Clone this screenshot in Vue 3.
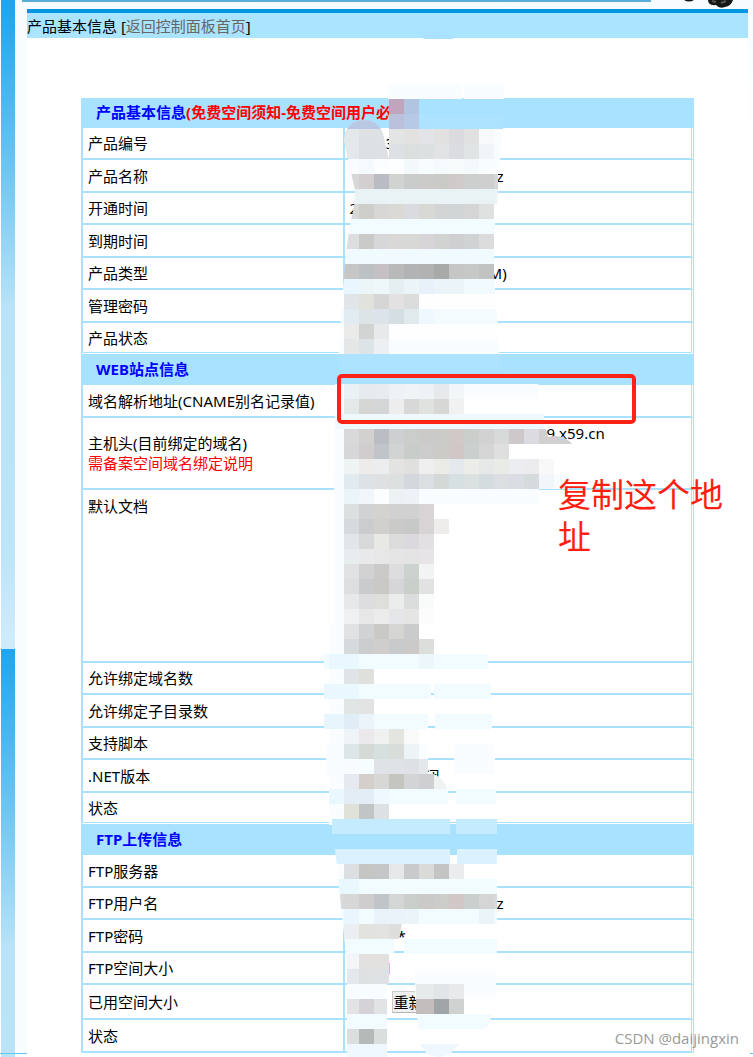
<script setup>
const sections = [
  {
    title: '产品基本信息',
    link: '(免费空间须知-免费空间用户必',
    rows: [
      { label: '产品编号', value: '3', indent: 41, size: 'r32' },
      { label: '产品名称', value: 'z', indent: 152, size: 'r33' },
      { label: '开通时间', value: '2', indent: 5, size: 'r32' },
      { label: '到期时间', size: 'r33' },
      { label: '产品类型', value: 'M)', indent: 144, size: 'r32' },
      { label: '管理密码', size: 'r33' },
      { label: '产品状态', size: 'r31' }
    ]
  },
  {
    title: 'WEB站点信息',
    rows: [
      { label: '域名解析地址(CNAME别名记录值)', size: 'r33' },
      { label: '主机头(目前绑定的域名)', note: '需备案空间域名绑定说明', value: '9 x59.cn', indent: 202, size: 'host' },
      { label: '默认文档', value: 'i', indent: 27, size: 'docs' },
      { label: '允许绑定域名数', size: 'r32' },
      { label: '允许绑定子目录数', size: 'r33' },
      { label: '支持脚本', size: 'r32' },
      { label: '.NET版本', value: '闭', indent: 80, size: 'r33' },
      { label: '状态', size: 'r31' }
    ]
  },
  {
    title: 'FTP上传信息',
    rows: [
      { label: 'FTP服务器', size: 'r33' },
      { label: 'FTP用户名', value: 'z', indent: 152, size: 'r32' },
      { label: 'FTP密码', value: '*', indent: 53, size: 'r33' },
      { label: 'FTP空间大小', value: 'l', indent: 42, size: 'r32' },
      { label: '已用空间大小', button: '重新', indent: 47, size: 'r35' },
      { label: '状态', size: 'r33' }
    ]
  }
]

// Pale smears: x, y, width, height, colour
const smears = [
  [388, 84, 74, 15, '#f9fdff'], [464, 84, 40, 15, '#f9fdff'],
  [419, 114, 84, 15, '#aee3ff'],
  [389, 129, 112, 30, '#f9fdff'], [346, 159, 154, 15, '#f9fdff'],
  [350, 174, 148, 15, '#d6d7d7'], [353, 189, 146, 15, '#e9f3f6'],
  [350, 204, 144, 15, '#d8d8d8'], [348, 219, 147, 15, '#f2fbff'],
  [346, 234, 148, 15, '#dcdedf'], [344, 249, 150, 15, '#f0faff'],
  [343, 264, 151, 15, '#c6c6c6'], [342, 279, 153, 15, '#f1fbff'],
  [340, 294, 156, 15, '#fefeff'], [340, 309, 158, 15, '#f3fbff'],
  [338, 324, 160, 15, '#fefeff'], [338, 339, 161, 15, '#f9fdff'],
  [339, 354, 161, 15, '#ade3ff'], [335, 384, 203, 15, '#f9fdff'],
  [335, 399, 109, 15, '#fdfeff'], [335, 414, 209, 15, '#eff8fc'],
  [334, 429, 210, 15, '#f9fdff'], [334, 444, 175, 15, '#f9fdff'],
  [334, 459, 219, 15, '#f9fdff'], [334, 474, 235, 15, '#f8fcff'],
  [334, 489, 205, 15, '#f9fdff'], [334, 504, 20, 120, '#f9fdff'],
  [329, 624, 30, 201, '#f9fdff'],
  [324, 654, 164, 15, '#f2fbff'], [329, 654, 30, 15, '#e9f7ff'],
  [324, 684, 107, 15, '#f2fbff'], [324, 684, 35, 15, '#e9f7ff'], [434, 684, 57, 15, '#f2fbff'],
  [324, 714, 104, 15, '#f2fbff'], [324, 714, 35, 15, '#e9f5fc'], [435, 714, 57, 15, '#f2fbff'],
  [326, 744, 102, 30, '#f9fdff'], [454, 744, 41, 30, '#f9fdff'],
  [329, 789, 119, 15, '#f2fbff'], [329, 789, 30, 15, '#e9f7ff'], [456, 789, 40, 15, '#f2fbff'],
  [332, 819, 118, 15, '#c5ebff'], [456, 819, 41, 15, '#c5ebff'],
  [335, 849, 115, 15, '#daf2ff'], [457, 849, 40, 15, '#daf2ff'],
  [335, 864, 22, 15, '#f9fdff'],
  [337, 879, 160, 15, '#f2fbff'], [337, 879, 22, 15, '#e9f7ff'],
  [340, 894, 157, 15, '#d8d9da'], [340, 909, 157, 15, '#f2fbff'],
  [341, 924, 58, 15, '#fafdff'], [343, 939, 51, 15, '#f2fbff'], [404, 939, 93, 15, '#f2fbff'],
  [345, 954, 44, 15, '#f2f6f8'], [346, 969, 42, 15, '#e2e8eb'],
  [415, 969, 81, 30, '#f9fdff'],
  [346, 984, 41, 15, '#f8fdff'], [346, 999, 41, 15, '#e1e3e4'],
  [346, 1014, 41, 15, '#f2fbff'], [346, 1029, 41, 15, '#dadedd'], [346, 1044, 41, 13, '#f0f8ff']
]

// Mosaic strips: y, x of the first block, block colours
const strips = [
  [99, 389, 'c1a5bd b1c5e1'],
  [114, 389, 'bbc0dc b6c9e5'],
  [129, 389, 'e3e5e5 e3e2e0 e2e4e7 e3e1df dbdbdf e1e1e1 f7f9fb'],
  [144, 389, 'dee1e3 dbe0df dbe0e0 e2e3e5 dadce2 e1e4e4 eff5f9'],
  [159, 359, 'f4fafd fcfdfe fcfeff f3f8fb f8fdff f5fbfd f8fbfc f4fafc f9fdff'],
  [174, 359, 'd3cfd0 b9bdc3 d0d3d0 c9cccb cccbc9 cacac7 d0cbca cccfce cfcfcf'],
  [204, 359, 'cecfcb d8d7d6 dad9d6 d9dbde d8d8d5 d3d4d6 d2d5d6 d5d5d5 dfe0e0'],
  [234, 359, 'cacac8 d7d7d9 dad8d6 d8d8d6 d7d5d8 d1d3d0 cfcfd1 d0d3d4 dcdcdc'],
  [264, 359, 'bcc1c4 c5c0c4 b9b9b9 b2b3b5 b2b2b2 a8a9a9 c6c6c6 c7c9c8 c1c2c2'],
  [279, 344, 'e8f7ff ecf5f7 eef7fa e5eef1 ebf4f8 e8f1f9 ebf4f8 ebf4f8'],
  [294, 344, 'e0e5e8 e1e2dc d6d6d6 e4e1e3 dbdddc'],
  [309, 344, 'e0ecf2 dde4e6 dce3eb d5dee2 e0e9ec f0f8ff'],
  [324, 344, 'ebebe9 d2d4d3 e8e9eb'],
  [339, 344, 'e4e7e5 dde4e7 ecf0f3'],
  [384, 344, 'e9f1f5 e5ebef e8ecef ecf2f5 eff4f7 ecf2f5 e6eaed f1f6f9'],
  [399, 344, 'e3e9e9 d5d6d3 d4d5d6 ededee d7d8d7 e0e2e0 d7d7d6 f1f1f2'],
  [429, 344, 'd9d9da d3d0d0 babec4 cdcfd0 cacdc9 cbcac9 cbcbc7 d0c9c8 cacfcc d3d2d2 d8dada cdc8ca dbdbe1'],
  [444, 344, 'd7d7d9 d1cdce c0c5c9 d2d3d3 c9cdc9 cbcccb cccbc8 d0c7c6 c9d0cd d5d5d5 dfdfe0'],
  [459, 344, 'eef4f4 edecea ecedee e3e4e1 e0e0df efeff0 ebebe7 e4e9ed ecece9 e5e8e6 e9ebe6 ecedf0 ececef f8f8f8'],
  [474, 344, 'e1eaee dce2e5 dee0e1 dce1e0 d4d7dd dcdfe1 d4d8d6 d6dfe2 dbe0e1 d5dcdf dbdfe2 dadde3 d5dadc f2f6fa'],
  [489, 344, 'eaf5fa f0f6fa fbfdff ecf2f3 ecf2f5'],
  [504, 344, 'd9e0df d0d2d3 d4d3cf d1d1d1 d2d1d2 d8d4d5'],
  [519, 344, 'd5dadd cacccd d1d0cd cacac9 c7c8c8 d8d3d4 eeedeb'],
  [534, 344, 'e0e6ea d8dad9 e8e8e5 dcdcdd dbd9dd e2e0e3'],
  [549, 344, 'e7ecef e9e9ec e7e7e7 e5e5e5 e4e4e4 e7e4e7'],
  [564, 344, 'e1e2e4 d2d2d3 cccac8 dddde0 ccd2ce f2f3f5'],
  [579, 344, 'dddee0 cacbcc cac9c6 d6d6d8 cacfca e1e2e1'],
  [594, 344, 'e7e8ea dddddf dededb ebedec dadddb f8fbf9'],
  [609, 344, 'eff0f2 e7e7e7 ececec e4e6e9 e5e5e3 fcfcfc'],
  [624, 344, 'e1e2e4 d1d2d3 cac9c6 d5d5d3 cacbcd'],
  [639, 344, 'd5dadd cacccd d0cecd c9cacb cbcac8 dbdedb'],
  [654, 419, 'edf7fb'],
  [669, 344, 'dfe4e6 dfe0dc'],
  [699, 344, 'e0e6e5 e4e3e4'],
  [714, 344, 'e0edf6 ebf4fa'],
  [729, 344, 'eff4f8 ebe9eb eef1f0 e4e4e1 f9f9f9'],
  [744, 344, 'dce6e8 d5dad7 d6e0de d8ddda edf4f8'],
  [759, 344, 'f8fcff f6fdff dfe2e6 dfe2e6 dde0e4'],
  [774, 344, 'e6eaf0 d4cfcb d7d7d6 c5c5bf d3d4d5 cfcfd1'],
  [789, 344, 'e2edf5 e2edf5 f0f8ff'],
  [804, 344, 'e0e1d9 c2c5c5 dde1e4'],
  [864, 344, 'dbdfe2 c5c6c3 c5c6c7 e6e7e9 c9cacb dadbd9 c4c4c5 ebecee'],
  [894, 344, 'd7d7d8 d0cdcf bfc5c9 d3d6d5 cacecb cbcac8 cccdc9 d0c7c6 c9d0ce d5d5d5'],
  [909, 344, 'e9f6ff f2fbfe eaf3fa eaf3fa ebf4f8'],
  [909, 479, 'ebf4f8'],
  [924, 344, 'ebeff1 e2e2df e3e3e1'],
  [954, 359, 'e2e1df e2e1df'],
  [969, 359, 'dee1e2 dee2e4'],
  [984, 419, 'e6eaeb e1e5e8 e7e9eb'],
  [999, 359, 'd6d3d8'],
  [999, 419, 'c4bdbe a0a5a8 d0d2d2'],
  [1029, 359, 'b5bab8']
]

const blocks = strips.flatMap(([y, x, colours]) =>
  colours.split(' ').map((c, i) => ({ x: x + i * 15, y, fill: '#' + c }))
)
</script>

<template>
  <div class="page">
    <div class="rail"></div>
    <main class="main">
      <div class="strip"></div>
      <header class="title-bar">产品基本信息 [<a href="#">返回控制面板首页</a>]</header>
      <table class="info">
        <colgroup>
          <col class="label-col" />
          <col />
        </colgroup>
        <tbody v-for="section in sections" :key="section.title">
          <tr class="head">
            <th colspan="2" scope="colgroup">{{ section.title }}<a v-if="section.link" href="#">{{ section.link }}</a></th>
          </tr>
          <tr v-for="row in section.rows" :key="row.label" :class="row.size">
            <th scope="row" class="label">
              {{ row.label }}<a v-if="row.note" href="#" class="note">{{ row.note }}</a>
            </th>
            <td class="value" :style="{ paddingLeft: (row.indent || 0) + 'px' }">
              <button v-if="row.button" type="button">{{ row.button }}</button>
              <template v-else>{{ row.value }}</template>
            </td>
          </tr>
        </tbody>
      </table>
    </main>

    <svg class="overlay" width="753" height="1057" viewBox="0 0 753 1057" aria-hidden="true">
      <defs>
        <clipPath id="brush">
          <path d="M300 80H600V129H501L500 165L497 204L494 240L494 275L500 354V369H600V1057H347V965L341 905L335 849H300V369H339V354L342 300L344 279L346 252L350 225L354 207L355 190L348 159L344 144V129H300Z" />
        </clipPath>
      </defs>
      <rect x="22" y="0" width="629" height="2" fill="#5aaedc" />
      <path d="M684 0Q689 3 694 0ZM708 0Q708 6 716 5Q719 9 725 7Q731 6 733 0Z" fill="#171717" />
      <path d="M712 1L716 2M721 3L726 1" stroke="#555" stroke-width="2" />
      <path d="M423 39Q428 32 439 32Q450 32 454 39Z" fill="#aae1ff" />
      <path d="M0 1053.500H27M750 1053.500H753" stroke="#64c5f3" />
      <g clip-path="url(#brush)" shape-rendering="crispEdges">
        <rect v-for="(s, i) in smears" :key="'s' + i" :x="s[0]" :y="s[1]" :width="s[2]" :height="s[3]" :fill="s[4]" />
      </g>
      <path d="M344 140Q345 121 364 120Q381 120 384 138L389 159H348Z" fill="#dee1e3" />
      <path d="M347 129Q352 120 364 120Q376 120 381 129Z" fill="#b9c8e4" />
      <path d="M344 140L348 159H359V129H347Z" fill="#e3e9eb" />
      <path d="M428 774V759H427L425 774Z" fill="#e5e8eb" />
      <rect x="419" y="759" width="8" height="15" fill="#e5e8eb" />
      <path d="M434 774Q445 779 447 789H434Z" fill="#f1f3f3" />
      <path d="M539 429H546L548 437Q563 433 572 444H539Z" fill="#d1cfd0" />
      <path d="M389 924H402L399 939H389Z" fill="#dededd" />
      <path d="M416 984H420V999H416Z" fill="#e6eaeb" />
      <path d="M416 999H420V1014H416Z" fill="#c4bdbe" />
      <path d="M417 1014H492Q489 1027 483 1029H418Z" fill="#f2fbff" />
      <path d="M420 1044H459Q450 1057 439 1057Q426 1057 420 1044Z" fill="#f0f8ff" />
      <g clip-path="url(#brush)" shape-rendering="crispEdges">
        <rect v-for="(b, i) in blocks" :key="i" :x="b.x" :y="b.y" width="15" height="15" :fill="b.fill" />
      </g>
    </svg>
    <div class="frame"></div>
    <p class="callout">复制这个地址</p>
    <span class="watermark">CSDN @daijingxin</span>
  </div>
</template>

<style>
body {
  margin: 0;
  background: #fff;
}
</style>

<style scoped>
.page {
  position: relative;
  display: flex;
  min-height: 1057px;
  overflow: hidden;
  box-sizing: border-box;
  padding: 0 5px 0 1px;
  background: linear-gradient(#f7fcff, #fff 160px);
  color: #000;
  font: 15px/20px "Noto Sans", "Noto Sans CJK SC", sans-serif;
}
.rail {
  flex: none;
  width: 14px;
  margin-right: 12px;
  background:
    linear-gradient(#1fa6ee, #1fa6ee) 0 0 / 100% 9px no-repeat,
    linear-gradient(#1fa6ee, #69c3f2 150px, #b9e3f8 300px, #bde4f8 540px, #cfecfc 640px) 0 9px / 100% 640px;
  box-shadow: 12px 0 #f9fdff;
}
.main {
  flex: 1;
  min-width: 0;
  margin-top: 9px;
  background: #fff;
}
.strip {
  height: 4px;
  background: #0296e1;
}
.title-bar {
  height: 25px;
  line-height: 27px;
  background: #aae4ff;
}
.title-bar a {
  color: #666;
  text-decoration: none;
}
.info {
  width: 85%;
  margin: 60px auto 0;
  table-layout: fixed;
  border-collapse: separate;
  border-spacing: 0;
}
.label-col {
  width: 43%;
}
th,
td {
  box-sizing: border-box;
  padding: 0;
  text-align: left;
}
.head th {
  height: 30px;
  padding: 0 0 2px 15px;
  background: #a8e2ff;
  color: #00f;
  white-space: nowrap;
}
.head a,
.note {
  color: #f00;
  text-decoration: none;
}
.note {
  display: block;
}
.label {
  padding-left: 5px;
  border: solid #a8e2ff;
  border-width: 0 2px 2px;
  font-weight: 400;
}
.value {
  border-right: 3px double #a8e2ff;
  border-bottom: 2px solid #a8e2ff;
  white-space: nowrap;
}
.r31 > * {
  height: 32px;
  border-bottom: 3px double #a8e2ff;
}
.r32 > * {
  height: 32px;
}
.r33 > * {
  height: 33px;
}
.r35 > * {
  height: 35px;
}
.host > * {
  height: 72px;
}
.host .value {
  padding-top: 5px;
  vertical-align: top;
}
.docs > * {
  height: 173px;
  padding-top: 6px;
  vertical-align: top;
}
button {
  display: block;
  width: 80px;
  height: 22px;
  padding: 0 1px;
  border: 1px solid #777;
  border-top-color: #ccc;
  border-left-color: #ccc;
  background: #efefef;
  color: #000;
  font: inherit;
  text-align: left;
  clip-path: inset(0 54px 0 0);
}
.overlay {
  position: absolute;
  top: 0;
  left: 0;
  pointer-events: none;
}
.frame {
  position: absolute;
  top: 374px;
  left: 337px;
  box-sizing: border-box;
  width: 299px;
  height: 50px;
  border: 4px solid #fe2315;
  border-radius: 5px;
}
.callout {
  position: absolute;
  top: 474px;
  left: 558px;
  width: 172px;
  margin: 0;
  color: #ff1e10;
  font-size: 33px;
  line-height: 42px;
}
.watermark {
  position: absolute;
  right: 14px;
  bottom: 9px;
  color: #999;
  font-family: "Open Sans", sans-serif;
  font-size: 15px;
}
</style>
